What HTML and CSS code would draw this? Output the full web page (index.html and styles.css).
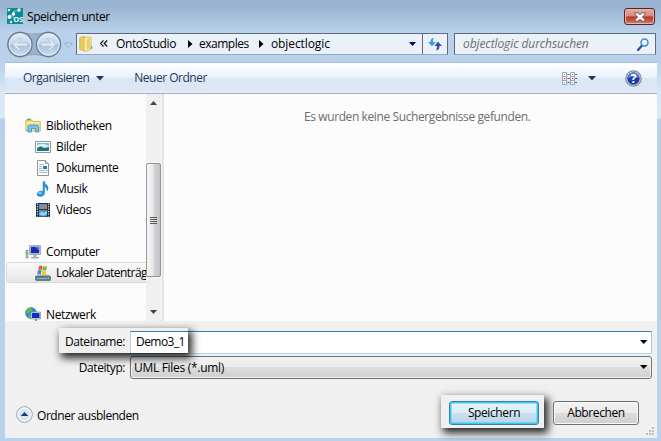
FILE: index.html
```
<!DOCTYPE html>
<html lang="de">
<head>
<meta charset="utf-8">
<title>Speichern unter</title>
<link rel="stylesheet" href="styles.css">
</head>
<body>
<div class="window">
  <header class="titlebar">
    <svg class="app-icon" width="16" height="16" viewBox="0 0 16 16"><rect width="16" height="16" fill="#0c8c98"/><path d="M3 9l4-6 5 0M7 3l-1 7" stroke="#79c8cd" fill="none"/><circle cx="2.5" cy="9" r="2" fill="#fff"/><circle cx="6.5" cy="6" r="1.7" fill="#fff"/><circle cx="2" cy="2" r="1.3" fill="#fff"/><circle cx="12" cy="2" r="1.7" fill="#fff"/><circle cx="4" cy="14" r="1.2" fill="#d6f3f5"/><text x="6.2" y="14.2" class="app-mark">OS</text></svg>
    <h1 class="title">Speichern unter</h1>
    <button class="close" aria-label="Schließen"><svg width="12" height="10" viewBox="0 0 12 10"><path d="M1 .8h3l2 2 2-2h3v1.7L8.3 5 11 7.5v1.7H8l-2-2-2 2H1V7.500L3.700 5 1 2.500z" fill="#fff" stroke="#5e4b50" stroke-width=".9"/></svg></button>
  </header>
  <nav class="navbar">
    <svg class="history" width="70" height="27" viewBox="0 0 70 27">
      <defs>
        <linearGradient id="orb" x1="0" y1="0" x2="0" y2="1"><stop offset="0" stop-color="#e3edf6"/><stop offset=".48" stop-color="#c5d6e7"/><stop offset=".52" stop-color="#a9c0d8"/><stop offset="1" stop-color="#cfe2f2"/></linearGradient>
      </defs>
      <path d="M13 1Q27 5 41 1A12.500 12.500 0 0 1 41 26Q27 21 13 26A12.500 12.500 0 0 1 13 1z" fill="#9bb2cb" stroke="#8da4bd"/>
      <g fill="url(#orb)" stroke="#667a91" stroke-width="1.3"><circle cx="13" cy="13.500" r="12"/><circle cx="41.500" cy="13.500" r="12"/></g>
      <g fill="none" stroke="#edf4fa" stroke-opacity=".8"><circle cx="13" cy="13.500" r="10.800"/><circle cx="41.500" cy="13.500" r="10.800"/></g>
      <path d="M5.500 13.500l6-6h3l-4 4.300h10v3.400h-10l4 4.300h-3z" fill="#dce8f3" stroke="#a6bdd4" stroke-width=".7"/>
      <path d="M49 13.500l-6-6h-3l4 4.300H34v3.400h10l-4 4.300h3z" fill="#dce8f3" stroke="#a6bdd4" stroke-width=".7"/>
      <path d="M57.500 12h8l-4 4.500z" fill="#c8d9eb" stroke="#8ca2bd" stroke-width=".8"/>
    </svg>
    <div class="address">
      <svg class="folder" width="14" height="16" viewBox="0 0 14 16"><path d="M.7 2L3 .7h3V15L.7 13.500z" fill="#e8cc65" stroke="#d0ae43" stroke-width=".7"/><path d="M5 2.500L8 1h4v12.500L7 15.500 5 14z" fill="#f9e79a" stroke="#d6b64e" stroke-width=".7"/><path d="M8 3l3-.8V13l-3 1z" fill="#edcd67"/><path d="M12 10h1.200v3H12z" fill="#53a6d5"/></svg>
      <svg class="chev" width="8" height="7" viewBox="0 0 8 7"><path d="M3.500 .5l-3 3 3 3M7.200 .5l-3 3 3 3" fill="none" stroke="#111" stroke-width="1.200"/></svg>
      <span class="crumb c1">OntoStudio</span>
      <svg class="sep" width="5" height="8" viewBox="0 0 5 8"><path d="M0 0l4.500 4L0 8z"/></svg>
      <span class="crumb c2">examples</span>
      <svg class="sep" width="5" height="8" viewBox="0 0 5 8"><path d="M0 0l4.500 4L0 8z"/></svg>
      <span class="crumb c3">objectlogic</span>
      <svg class="drop" width="7" height="4" viewBox="0 0 7 4"><path d="M0 0h7L3.500 4z" fill="#00005a"/></svg>
      <span class="refresh"><svg width="14" height="14" viewBox="0 0 14 14"><path d="M5.800 1Q2.500 .8 2.500 5H0L4 9.200 8 5H5Q4.800 2.500 5.800 1z" fill="#3c9bdd"/><path d="M8.200 13.200Q11.500 13.400 11.500 9H14L10 4.800 6.300 9H9Q9.200 11.800 8.200 13.200z" fill="#2455a5"/></svg></span>
    </div>
    <div class="search"><span>objectlogic durchsuchen</span>
      <svg width="12" height="13" viewBox="0 0 12 13"><path d="M5 7.500L1 12" stroke="#244f9e" stroke-width="2.200" stroke-linecap="round"/><circle cx="7.500" cy="4.500" r="3.500" fill="#e8f5fc" stroke="#378cca" stroke-width="1.500"/></svg>
    </div>
  </nav>
  <div class="toolbar">
    <span class="t1">Organisieren</span>
    <svg class="t1-arrow" width="8" height="5" viewBox="0 0 8 5"><path d="M0 0h8L4 4.500z" fill="#1e395b"/></svg>
    <span class="t2">Neuer Ordner</span>
    <svg class="views" width="15" height="13" viewBox="0 0 15 13"><g fill="#fff" stroke="#8493a5" stroke-width=".8"><path d="M.5.5h4v12h-4zM8.500.5h4v12h-4zM.5 4.500h4M.5 8.500h4M8.500 4.500h4M8.500 8.500h4"/></g><path d="M5.500 2.500h2M5.500 6.500h2M5.500 10.500h2M13.200 2.500H15M13.200 6.500H15M13.200 10.500H15" stroke="#52647a"/><path d="M2 2h1v1H2zM10 2h1v1h-1zM2 10h1v1H2zM10 10h1v1h-1z" fill="#6ba1b9"/><path d="M2 6h1.200v1.200H2zM10 6h1.200v1.200H10z" fill="#c11e1e"/></svg>
    <svg class="views-arrow" width="8" height="5" viewBox="0 0 8 5"><path d="M0 0h8L4 4.500z" fill="#1e395b"/></svg>
    <svg class="help" width="17" height="17" viewBox="0 0 17 17"><circle cx="8.500" cy="8.500" r="7.700" fill="#e6e9ee" stroke="#84888f" stroke-width="1.200"/><circle cx="8.500" cy="8.500" r="6.300" fill="#203da6"/><path d="M3 8a5.500 5.500 0 0 1 11 0Q8 6 3 8z" fill="#5d81d3"/><text x="8.500" y="13" text-anchor="middle" class="help-mark">?</text></svg>
  </div>
  <main class="content">
    <ul class="tree">
      <li><svg width="16" height="16" viewBox="0 0 16 16"><path d="M.8 2h6l1 1.500h7.500V13H.8z" fill="#f3dc83" stroke="#cfae54" stroke-width=".8"/><path d="M1.500 5h13" stroke="#fff6c5"/><path d="M2 1.500h4" stroke="#5eb544" stroke-width="1.500"/><path d="M3 14V9q0-2 2-2h6.500q2 0 2 2v5h-3v-3.500h-4V14z" fill="#79c3e8" stroke="#3b91c5" stroke-width=".8"/></svg><span>Bibliotheken</span></li>
      <li class="sub"><svg width="16" height="16" viewBox="0 0 16 16"><path d="M.5 2.500h15v11H.5z" fill="#fff" stroke="#92989e"/><path d="M2 4h12v8H2z" fill="#63b9e8"/><path d="M2 6q6-3 12 1v2H2z" fill="#d6f0f6"/><path d="M2 9q4-3 7 0l5-1v4H2z" fill="#1e7968"/><path d="M2 11h12v1H2z" fill="#2170af"/></svg><span>Bilder</span></li>
      <li class="sub"><svg width="16" height="16" viewBox="0 0 16 16"><path d="M2.500.5h8l3 3v12h-11z" fill="#fff" stroke="#8e959d"/><path d="M10.500.5v3h3" fill="#dce7ef" stroke="#8e959d"/><path d="M4 4.500h5M4 6.500h3M4 8.500h3M4 10.500h8M4 12.500h8" stroke="#96a8be" stroke-width=".8"/><path d="M8 6h4v3H8z" fill="#2379c5"/></svg><span>Dokumente</span></li>
      <li class="sub"><svg width="16" height="16" viewBox="0 0 16 16"><path d="M8 .5h1.500q0 2 2.300 3.700Q14.500 6.500 12 10q.4-3-2.500-4.500v7.200Q9 15 5.500 15.500 2 15.500 2 13q.4-2.700 4-3 1.200 0 2 .3z" fill="#2493dc" stroke="#1a77b8" stroke-width=".4"/><ellipse cx="5" cy="12" rx="2" ry="1.200" fill="#78caf2"/></svg><span>Musik</span></li>
      <li class="sub"><svg width="16" height="16" viewBox="0 0 16 16"><path d="M1 1h14v14H1z" fill="#252f38"/><path d="M4 2h8v5H4z" fill="#5299d6"/><path d="M4 8h8v6.500H4z" fill="#3f99d8"/><path d="M5 7l2-3 3 1 2-2v4z" fill="#d3795c"/><path d="M4 12q3-4 5-1l3-2v3l-4 2z" fill="#95d4ec"/><path d="M2.500 1.500v13M13.500 1.500v13" stroke="#e3eaee" stroke-width="1.200" stroke-dasharray="1.200 1.300"/></svg><span>Videos</span></li>
      <li class="gap"></li>
      <li><svg width="16" height="16" viewBox="0 0 16 16"><path d="M1 6h2v8H1z" fill="#b9c0c5" stroke="#858d94" stroke-width=".6"/><path d="M1 8h1.500v2H1z" fill="#59bb44"/><path d="M4.500 1.500h11v9h-11z" fill="#d3d7dc" stroke="#9299a2" stroke-width=".8"/><path d="M5.800 2.800h8.400v6.400H5.800z" fill="#152cb9"/><path d="M10 2.800h4.200v4z" fill="#5877df"/><path d="M8.500 11h3v2h2.500v1.500H6V13h2.500z" fill="#a9adb2"/></svg><span>Computer</span></li>
      <li class="sub selected"><svg width="16" height="16" viewBox="0 0 16 16"><path d="M2.500 9.500h11l2 2H.5z" fill="#c7cfd3"/><rect x=".5" y="11" width="15" height="4.500" rx="1" fill="#587f91" stroke="#56636c" stroke-width=".7"/><path d="M2 13.500h10" stroke="#8db8c7"/><path d="M12.500 12.500h1.500v1.500h-1.500z" fill="#5fe562"/><path d="M4 1.200Q6-.2 7.500 1L6.800 5Q5 4 3.200 5z" fill="#e75d25"/><path d="M8 1.300Q10 2.300 12 1l-.7 4Q9 6 7.300 5z" fill="#76b834"/><path d="M3 5.500q2-1 3.500 0l-.7 4Q4 8.500 2.200 9.500z" fill="#328cd9"/><path d="M7.200 5.700q2 1 4 0l-.7 4q-2 1-4 0z" fill="#f8c52b"/></svg><span>Lokaler Datenträg</span></li>
      <li class="gap"></li>
      <li><svg width="16" height="16" viewBox="0 0 16 16"><circle cx="6" cy="6" r="5.500" fill="#2d8bda" stroke="#286ba5" stroke-width=".5"/><path d="M2 2l4-1 1 2-3 3-3 1zM3 8l3 1v2H4z" fill="#65bd3e"/><path d="M6 5h9.500v7H6z" fill="#d1d7df" stroke="#858f9d" stroke-width=".7"/><path d="M7 6h7.500v5H7z" fill="#142cc2"/><path d="M10 12h2v2h2v1H8v-1h2z" fill="#8c949d"/></svg><span>Netzwerk</span></li>
    </ul>
    <div class="scrollbar">
      <svg class="up" width="7" height="4" viewBox="0 0 7 4"><path d="M0 4h7L3.500 0z" fill="#444"/></svg>
      <div class="thumb"><i></i><i></i><i></i><i></i></div>
      <svg class="down" width="7" height="4" viewBox="0 0 7 4"><path d="M0 0h7L3.500 4z" fill="#444"/></svg>
    </div>
    <section class="results"><span>Es wurden keine Suchergebnisse gefunden.</span></section>
  </main>
  <footer class="footer">
    <div class="row">
      <div class="combo edit"><svg width="8" height="5" viewBox="0 0 8 5"><path d="M0 0h7.500L3.700 4z"/></svg></div>
      <div class="highlight"><span class="label">Dateiname:</span><span class="value">Demo3_1</span></div>
    </div>
    <div class="row type">
      <span class="label">Dateityp:</span>
      <div class="combo select"><span>UML Files (*.uml)</span><svg width="8" height="5" viewBox="0 0 8 5"><path d="M0 0h7.500L3.700 4z"/></svg></div>
    </div>
    <div class="actions">
      <svg class="fold" width="17" height="17" viewBox="0 0 17 17"><circle cx="8.500" cy="8.500" r="7.800" fill="#dde4ef" stroke="#8c99b1"/><circle cx="8.500" cy="8.500" r="6.500" fill="none" stroke="#f9fbfd" stroke-width="1.300"/><path d="M4.700 10h7.600L8.500 6z" fill="#173b83"/></svg>
      <span class="fold-label">Ordner ausblenden</span>
      <div class="save-frame"><button class="btn primary"><span>Speichern</span></button></div>
      <button class="btn"><span>Abbrechen</span></button>
    </div>
    <svg class="grip" width="9" height="9" viewBox="0 0 9 9"><path d="M6 0h2v2H6zM3 3h2v2H3zM6 3h2v2H6zM0 6h2v2H0zM3 6h2v2H3zM6 6h2v2H6z" fill="#bdbdbd"/></svg>
  </footer>
</div>
</body>
</html>
```

FILE: styles.css
```
* { box-sizing: border-box; }
body { margin: 0; overflow: hidden; font: 12px/16px "Open Sans", "Noto Sans", sans-serif; color: #000; }
svg { display: block; flex: none; }
span { white-space: nowrap; }
button { font: inherit; }

.window {
  display: flex; flex-direction: column;
  width: 661px; height: 441px; padding: 0 4px 3px 5px;
  background: linear-gradient(#99b4d1 0, #9bb6d2 8px, #b9d1ea 32px, #b9d1ea 62px, #d8e6f5 90px, #dce9f6 118px, #b9d1ea 119px);
}
.titlebar { display: flex; height: 31px; padding: 8px 2px 0; }
.title { margin: 0 auto 0 4px; font-size: 12px; font-weight: 400; line-height: 17px; letter-spacing: -0.45px; white-space: nowrap; }
.app-mark { font: 700 7.5px "Open Sans", sans-serif; fill: #fff; }
.close {
  display: flex; align-items: center; justify-content: center;
  width: 31px; height: 17px; padding: 0;
  border: 1px solid #4f2430; border-radius: 3px;
  background: linear-gradient(#e9aaa0, #d8897e 46%, #b93b2a 52%, #c4503d 75%, #d98a77);
  box-shadow: inset 0 0 0 1px #e8b5ab;
}
.navbar { display: flex; height: 31px; padding: 0 1px 0 2px; }
.history { margin-right: -1px; }
.address, .search { display: flex; align-items: center; margin-top: 2px; height: 22px; border: 1px solid #5c6b80; border-bottom-color: #99a8b9; background: #eaf1f9; }
.address { width: 372px; padding-left: 2px; }
.chev { margin-left: 7px; margin-right: 8px; margin-top: -1px; }
.c1 { width: 72px; letter-spacing: -0.4px; }
.c2 { width: 60px; margin-left: 6px; letter-spacing: -0.5px; }
.c3 { margin-left: 7px; letter-spacing: -0.1px; }
.drop { margin-left: auto; margin-right: 6px; }
.refresh { display: flex; align-items: center; justify-content: center; width: 25px; height: 20px; border-left: 1px solid #5c6b80; }
.search { width: 202px; margin-left: 6px; padding: 0 6px 0 8px; justify-content: space-between; font-style: italic; color: #6c6e73; border-radius: 1px; }
.search span { letter-spacing: -0.1px; }

.toolbar {
  display: flex; align-items: center; height: 32px; padding: 0 15px 0 18px; color: #1e395b;
  border-top: 1px solid #a3bfdd; border-bottom: 1px solid #a0afc3;
  background: linear-gradient(#fff, #eaf3fc 47%, #dce7f5 50%, #dce7f5 92%, #e8f0fa);
}
.t1 { letter-spacing: -0.5px; }
.t1-arrow { margin-left: 7px; }
.t2 { margin-left: 30px; letter-spacing: -0.5px; }
.views { margin-left: auto; }
.views-arrow { margin-left: 11px; }
.help { margin-left: 29px; }
.help-mark { font: 700 12px "Open Sans", sans-serif; fill: #fff; }

.content { display: flex; height: 227px; background: #fcfcfc; }
.tree { width: 141px; margin: 0; padding: 21px 0 0 1px; list-style: none; overflow: hidden; letter-spacing: -0.37px; }
.tree li { display: flex; align-items: center; height: 21px; padding-left: 19px; }
.tree li span { margin-left: 5px; }
.tree .sub { padding-left: 29px; }
.tree .selected { width: 150px; padding-left: 28px; border: 1px solid #d9d9d9; border-radius: 3px; background: linear-gradient(#fafafa, #e6e6e6); letter-spacing: -0.55px; }
.scrollbar { display: flex; flex-direction: column; align-items: center; width: 17px; padding: 7px 1px 7px 0; background: #f0f0f0; border-right: 1px solid #e8e8e8; }
.thumb {
  display: flex; flex-direction: column; align-items: center; justify-content: center; gap: 1px;
  width: 15px; height: 114px; margin: 58px 0 auto;
  border: 1px solid #979797; border-radius: 2px;
  background: linear-gradient(90deg, #f6f6f6, #e9e9eb 45%, #d4d5d8 55%, #c0c1c5);
}
.thumb i { width: 7px; height: 1px; background: #5b5b5b; }
.results { flex: 1; padding: 15px 0 0 140px; border-left: 1px solid #d6e5f5; color: #6d6d6d; }
.results span { letter-spacing: -0.4px; }

.footer { position: relative; flex: 1; padding: 10px 5px 0 0; background: #f0f0f0; letter-spacing: -0.45px; }
.row { display: flex; justify-content: flex-end; align-items: center; position: relative; }
.row.type { margin-top: 2px; }
.combo { display: flex; align-items: center; width: 522px; height: 23px; padding: 0 3px; border: 1px solid; }
.combo svg { margin-left: auto; }
.edit { background: #fff; border-color: #3d7bad #a4c9e3 #b7d9ed #b5cfe7; border-radius: 1px; }
.select { border-color: #707070; border-radius: 3px; background: linear-gradient(#f2f2f2, #ebebeb 48%, #dddddd 50%, #cfcfcf); box-shadow: inset 0 0 0 1px #f5f5f5; letter-spacing: -0.3px; }
.label { margin-right: 5px; }
.highlight {
  position: absolute; left: 54px; top: -3px; z-index: 1;
  display: flex; align-items: stretch; width: 129px; height: 25px; padding-top: 3px;
  justify-content: flex-end; background: #f0f0f0; line-height: 22px;
  box-shadow: 3px 4px 8px 1px rgba(0, 0, 0, .85);
}
.value { width: 58px; padding-left: 5px; line-height: 20px; background: #fff; border-top: 1px solid #3d7bad; border-left: 1px solid #b5cfe7; letter-spacing: -0.55px; }
.actions { display: flex; align-items: center; height: 33px; margin-top: 16px; padding-left: 11px; }
.fold { margin-right: 4px; margin-top: 5px; }
.fold-label { margin-top: 8px; }
.save-frame { display: flex; align-items: center; width: 103px; height: 33px; padding: 3px 5px 0 8px; margin: 0 9px 0 auto; background: #f0f0f0; box-shadow: 3px 4px 8px 1px rgba(0, 0, 0, .85); }
.btn {
  display: flex; align-items: center; justify-content: center; width: 86px; height: 24px; margin: 3px 13px 0 0; padding: 0;
  border: 1px solid #707070; border-radius: 3px; letter-spacing: -0.4px;
  background: linear-gradient(#f2f2f2, #ebebeb 48%, #dddddd 50%, #cfcfcf); box-shadow: inset 0 0 0 1px #f8f8f8;
}
.primary { width: 90px; margin: 0; border-color: #3c7fb1; background: linear-gradient(#ebf4fa, #dcedf7 48%, #c9e0ef 50%, #bcd6e6); box-shadow: inset 0 0 0 1.500px #35cbf5; }
.grip { position: absolute; right: 2px; bottom: 2px; }
```
